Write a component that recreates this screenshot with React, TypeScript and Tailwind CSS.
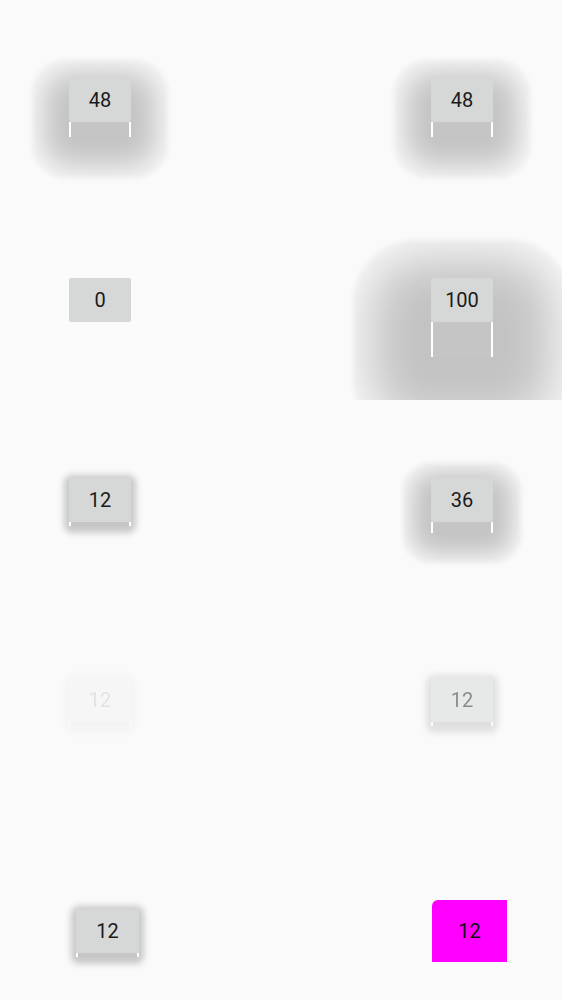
import React from "react";

type Elev = {
  label: string;
  strip: number;
  // shadow rect relative to the button box
  sx: number;
  sy: number;
  sw: number;
  sh: number;
  glow: string;
  fade?: string;
  width?: string;
};

function ElevatedButton({ label, strip, sx, sy, sw, sh, glow, fade, width }: Elev) {
  return (
    <div className={`relative w-fit ${fade ?? ""}`}>
      <div
        className={`absolute bg-[#c3c3c3] ${glow}`}
        style={{ left: sx, top: sy, width: sw, height: sh }}
      />
      <div className="relative flex flex-col">
        <div
          className={`${width ?? "w-[62px]"} h-[44px] rounded-[2px] bg-[#d6d7d7] flex items-center justify-center text-[20px] text-[#1a1a1a] font-['Roboto',sans-serif]`}
        >
          {label}
        </div>
        <div className="flex justify-between bg-[#c5c5c5]" style={{ height: strip }}>
          <div className="w-[2px] h-full bg-white" />
          <div className="w-[2px] h-full bg-white" />
        </div>
      </div>
    </div>
  );
}

const glow48 = "rounded-[34px] blur-[2px] shadow-[inset_0_0_30px_11px_#fafafa]";
const glow100 = "rounded-[64px] blur-[2px] shadow-[inset_0_0_50px_17px_#fafafa]";
const glow36 = "rounded-[28px] blur-[2px] shadow-[inset_0_0_24px_8px_#fafafa]";
const glow12 = "rounded-[8px] blur-[3px] bg-[#c8c8c8]";

export default function App() {
  return (
    <div className="w-[562px] h-[1000px] bg-[#fafafa] grid grid-cols-[281px_281px] grid-rows-[200px_200px_200px_200px_200px] overflow-hidden">
      {/* row 1 */}
      <div className="relative overflow-hidden pl-[69px] pt-[78px]">
        <ElevatedButton label="48" strip={15} sx={-37} sy={-18} sw={136} sh={118} glow={glow48} />
      </div>
      <div className="relative overflow-hidden flex justify-end pr-[69px] pt-[78px]">
        <ElevatedButton label="48" strip={15} sx={-37} sy={-18} sw={136} sh={118} glow={glow48} />
      </div>

      {/* row 2 */}
      <div className="relative overflow-hidden pl-[69px] pt-[78px]">
        <div className="w-[62px] h-[44px] rounded-[2px] bg-[#d6d7d7] flex items-center justify-center text-[20px] text-[#1a1a1a] font-['Roboto',sans-serif]">
          0
        </div>
      </div>
      <div className="relative overflow-hidden flex justify-end pr-[69px] pt-[78px]">
        <ElevatedButton label="100" strip={35} sx={-78} sy={-38} sw={218} sh={200} glow={glow100} />
      </div>

      {/* row 3 */}
      <div className="relative overflow-hidden pl-[69px] pt-[78px]">
        <ElevatedButton label="12" strip={4} sx={-5} sy={-3} sw={72} sh={58} glow={glow12} />
      </div>
      <div className="relative overflow-hidden flex justify-end pr-[69px] pt-[78px]">
        <ElevatedButton label="36" strip={11} sx={-28} sy={-15} sw={118} sh={100} glow={glow36} />
      </div>

      {/* row 4 */}
      <div className="relative overflow-hidden pl-[69px] pt-[78px]">
        <ElevatedButton label="12" strip={4} sx={-5} sy={-3} sw={72} sh={58} glow={glow12} fade="opacity-10" />
      </div>
      <div className="relative overflow-hidden flex justify-end pr-[69px] pt-[78px]">
        <ElevatedButton label="12" strip={4} sx={-5} sy={-3} sw={72} sh={58} glow={glow12} fade="opacity-50" />
      </div>

      {/* row 5 */}
      <div className="relative overflow-hidden pl-[76px] pt-[109px]">
        <ElevatedButton label="12" strip={4} sx={-5} sy={-3} sw={73} sh={58} glow={glow12} width="w-[63px]" />
      </div>
      <div className="relative overflow-hidden flex justify-end pr-[55px] pt-[100px]">
        <div className="w-[75px] h-[62px] rounded-tl-[6px] bg-[#ff00ff] flex items-center justify-center text-[20px] text-[#111111] font-['Roboto',sans-serif]">
          12
        </div>
      </div>
    </div>
  );
}
